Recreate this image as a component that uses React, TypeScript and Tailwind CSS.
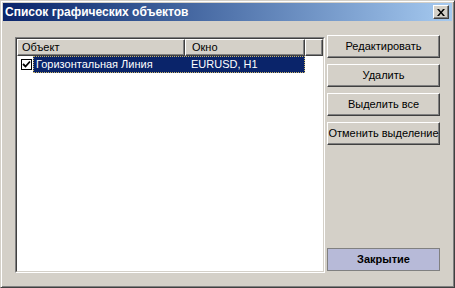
import React from "react";

const font = { fontFamily: '"Liberation Sans", Arial, sans-serif' };

function Button({ label, primary }: { label: string; primary?: boolean }) {
  return (
    <button
      type="button"
      className={[
        "h-[23px] w-[113px] text-[11px] leading-none text-black",
        primary
          ? "border border-[#808080] bg-[#b7bad8] font-bold"
          : "border border-t-white border-l-white border-r-[#404040] border-b-[#404040] bg-[#d4d0c8] shadow-[inset_-1px_-1px_#808080]",
      ].join(" ")}
    >
      {label}
    </button>
  );
}

function HeaderCell({ label, className }: { label: string; className: string }) {
  return (
    <div
      className={[
        "flex h-[17px] items-center border border-t-white border-l-white border-r-[#404040] border-b-[#404040] bg-[#d4d0c8] pl-[4px] shadow-[inset_-1px_-1px_#808080]",
        className,
      ].join(" ")}
    >
      {label}
    </div>
  );
}

export default function App() {
  return (
    <div
      style={font}
      className="flex h-[288px] w-[455px] flex-col border border-t-[#d4d0c8] border-l-[#d4d0c8] border-r-[#404040] border-b-[#404040] bg-[#d4d0c8] p-[2px] text-[11px] text-black shadow-[inset_1px_1px_#fff,inset_-1px_-1px_#808080]"
    >
      {/* title bar */}
      <div className="flex h-[18px] items-center justify-between bg-gradient-to-r from-[#0a246a] to-[#a6caf0] pl-[2px] pr-[3px]">
        <span className="text-[12px] font-bold text-white">Список графических объектов</span>
        <div className="flex h-[14px] w-[16px] items-center justify-center border border-t-white border-l-white border-r-[#404040] border-b-[#404040] bg-[#d4d0c8] shadow-[inset_-1px_-1px_#808080]">
          <svg width="8" height="7" viewBox="0 0 8 7">
            <path d="M0 0h2l2 2.5L6 0h2L5 3.5 8 7H6L4 4.5 2 7H0l3-3.5z" fill="#000" />
          </svg>
        </div>
      </div>

      {/* body */}
      <div className="flex flex-1 items-start gap-[2px] pl-[12px] pt-[14px]">
        <div className="mt-[2px] h-[236px] w-[310px] border border-t-[#808080] border-l-[#808080] border-r-white border-b-white">
          <div className="h-full w-full border border-t-[#404040] border-l-[#404040] border-r-[#d4d0c8] border-b-[#d4d0c8] bg-white">
            <div className="flex">
              <HeaderCell label="Объект" className="w-[168px]" />
              <HeaderCell label="Окно" className="w-[120px] pl-[6px]" />
              <HeaderCell label="" className="flex-1" />
            </div>
            <div className="flex h-[17px] items-center">
              <div className="ml-[4px] mr-[1px] flex h-[11px] w-[11px] items-center justify-center border border-black bg-white">
                <svg width="9" height="9" viewBox="0 0 9 9">
                  <path d="M1 4l2.5 2.5L8 1.5" fill="none" stroke="#000" strokeWidth="1.8" />
                </svg>
              </div>
              <div className="flex h-full w-[272px] items-center border border-dotted border-[#c8b468] bg-[#0a246a] text-white">
                <span className="w-[157px] pl-[2px]">Горизонтальная Линия</span>
                <span>EURUSD, H1</span>
              </div>
            </div>
          </div>
        </div>

        <div className="flex h-[236px] flex-col">
          <div className="flex flex-col gap-[6px]">
            <Button label="Редактировать" />
            <Button label="Удалить" />
            <Button label="Выделить все" />
            <Button label="Отменить выделение" />
          </div>
          <div className="mt-auto">
            <Button label="Закрытие" primary />
          </div>
        </div>
      </div>
    </div>
  );
}
